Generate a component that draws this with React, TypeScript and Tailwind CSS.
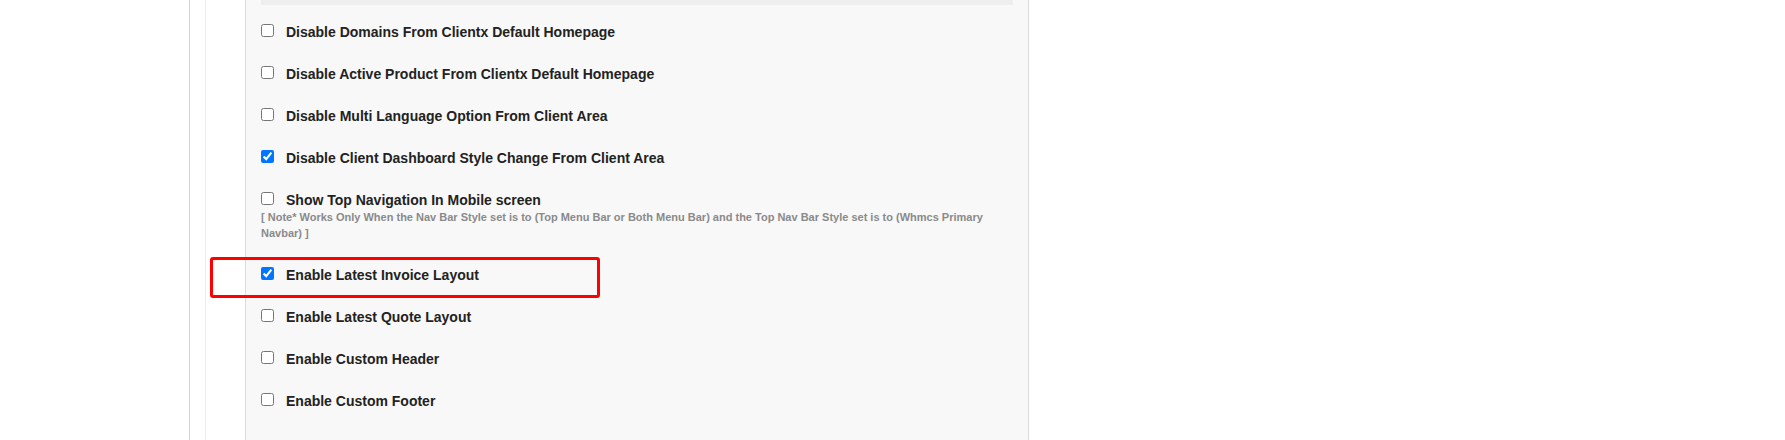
const options = [
  { label: "Disable Domains From Clientx Default Homepage", checked: false },
  { label: "Disable Active Product From Clientx Default Homepage", checked: false },
  { label: "Disable Multi Language Option From Client Area", checked: false },
  { label: "Disable Client Dashboard Style Change From Client Area", checked: true },
  {
    label: "Show Top Navigation In Mobile screen",
    checked: false,
    note: "[ Note* Works Only When the Nav Bar Style set is to (Top Menu Bar or Both Menu Bar) and the Top Nav Bar Style set is to (Whmcs Primary Navbar) ]",
  },
  { label: "Enable Latest Invoice Layout", checked: true },
  { label: "Enable Latest Quote Layout", checked: false },
  { label: "Enable Custom Header", checked: false },
  { label: "Enable Custom Footer", checked: false },
];

export default function App() {
  return (
    <div className="relative h-[440px] w-full overflow-hidden bg-white font-['Liberation_Sans',Arial,sans-serif]">
      <div className="flex h-full">
        <div className="w-[189px] shrink-0" />
        <div className="flex h-full border-l border-[#d4d4d4] pl-[15px]">
          <div className="flex h-full border-l border-[#e6ecf5] pl-[39px]">
            <div className="h-full w-[784px] border-x border-[#dcdcdc] bg-[#f8f8f8] px-[15px]">
              <div className="h-[5px] bg-[#eeeeee]" />
              <div className="flex flex-col gap-[24px] pt-[18px]">
                {options.map((opt) => (
                  <div key={opt.label}>
                    <label className="flex items-start gap-[12px]">
                      <input type="checkbox" defaultChecked={opt.checked} className="mt-[1px] h-[13px] w-[13px] shrink-0" />
                      <span className="text-[14px] font-bold leading-[18px] text-[#222]">{opt.label}</span>
                    </label>
                    {opt.note && (
                      <p className="mb-[1px] text-[11px] font-bold leading-[16px] text-[#8a8a8a]">{opt.note}</p>
                    )}
                  </div>
                ))}
              </div>
            </div>
          </div>
        </div>
      </div>
      <div className="pointer-events-none absolute left-[210px] top-[257px] h-[41px] w-[390px] rounded-[3px] border-[3px] border-[#ff0000]" />
    </div>
  );
}
